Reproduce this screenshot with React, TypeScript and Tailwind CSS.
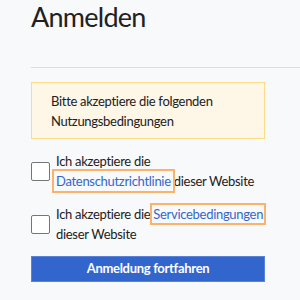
export default function App() {
  return (
    <div className="min-h-[300px] w-full bg-[#f8f9fa] pl-[31px] text-[#202122] font-['Lato','Liberation_Sans',sans-serif]">
      <div className="h-[68px] border-b border-[#dcdee3]">
        <h1 className="text-[27px] leading-[34px] font-normal tracking-[-0.75px]">Anmelden</h1>
      </div>
      <div className="w-[234px] pt-[14px] text-[13px] leading-[19.5px] tracking-[-0.3px]">
        <div className="border border-[#fddc87] bg-[#fef6e7] pl-[19px] pr-4 pt-[9px] pb-[7px]">
          Bitte akzeptiere die folgenden Nutzungsbedingungen
        </div>
        <div className="mt-[13px] flex items-center gap-[6px]">
          <div className="h-[19px] w-[19px] shrink-0 rounded-[2px] border border-[#72777d] bg-white" />
          <p>
            Ich akzeptiere die{" "}
            <a className="text-[#3366cc] outline-2 outline-offset-[2px] outline-[#fbb26a]">
              Datenschutzrichtlinie
            </a>{" "}
            dieser Website
          </p>
        </div>
        <div className="mt-[14px] flex items-center gap-[6px]">
          <div className="h-[19px] w-[19px] shrink-0 rounded-[2px] border border-[#72777d] bg-white" />
          <p>
            Ich akzeptiere die{" "}
            <a className="text-[#3366cc] outline-2 outline-offset-[1px] outline-[#fbb26a]">
              Servicebedingungen
            </a>{" "}
            dieser Website
          </p>
        </div>
        <button className="mt-[12px] block h-[26px] w-full border border-[#5a83d8] bg-[#3366cc] font-bold text-white">
          Anmeldung fortfahren
        </button>
      </div>
    </div>
  );
}
